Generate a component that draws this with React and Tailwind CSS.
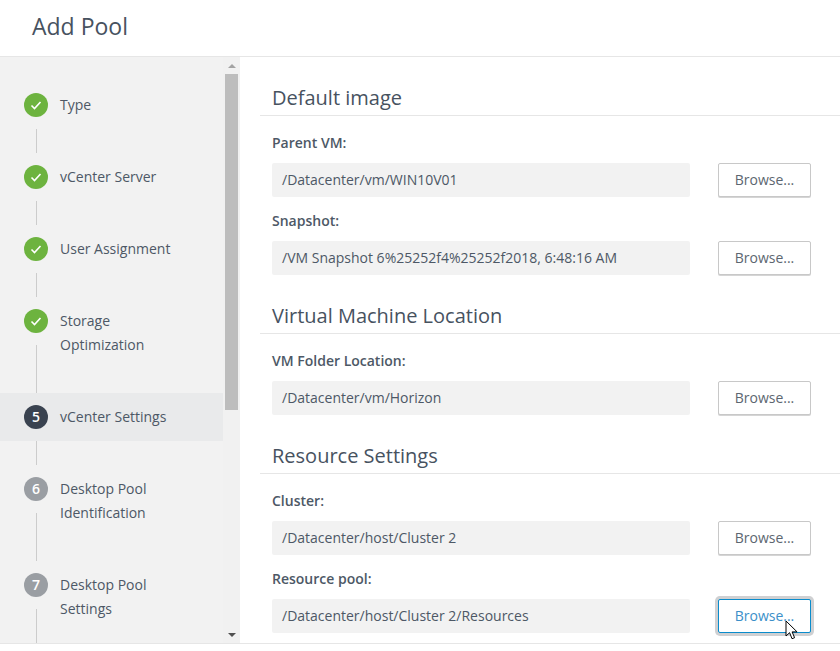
const font = { fontFamily: '"Open Sans", sans-serif' }

const Check = () => (
  <svg viewBox="0 0 24 24" className="h-6 w-6">
    <path d="M7.5 12.5l3 3 6-6.5" fill="none" stroke="#fff" strokeWidth="1.6" />
  </svg>
)

const Circle = ({ status, n }) => {
  if (status === 'done') {
    return (
      <div className="h-6 w-6 shrink-0 rounded-full bg-[#6db33f]">
        <Check />
      </div>
    )
  }
  return (
    <div
      className={`flex h-6 w-6 shrink-0 items-center justify-center rounded-full text-sm font-semibold text-white ${
        status === 'current' ? 'bg-[#3a4350]' : 'bg-[#9a9ea3]'
      }`}
    >
      {n}
    </div>
  )
}

const Step = ({ status = 'done', n, lines }) => {
  if (lines.length === 1) {
    return (
      <div className="flex flex-col">
        <div className={`flex h-12 items-center gap-3 pl-6 ${status === 'current' ? 'bg-[#e9eaeb]' : ''}`}>
          <Circle status={status} n={n} />
          <span className="text-sm leading-6 text-[#4d5866]">{lines[0]}</span>
        </div>
        <div className="ml-[36px] h-6 w-px bg-[#cccccc]" />
      </div>
    )
  }
  return (
    <div className="flex h-[96px] shrink-0 gap-3 pl-6 pt-3">
      <div className="flex flex-col">
        <Circle status={status} n={n} />
        <div className="ml-3 mt-3 w-px flex-1 bg-[#cccccc]" />
      </div>
      <div className="text-sm leading-6 text-[#4d5866]">
        {lines.map((l) => (
          <div key={l}>{l}</div>
        ))}
      </div>
    </div>
  )
}

const Scrollbar = () => (
  <div className="flex w-[17px] shrink-0 flex-col items-center bg-[#f1f1f1]">
    <div className="flex h-[17px] items-center justify-center">
      <div className="h-0 w-0 border-x-[4px] border-b-[4px] border-x-transparent border-b-[#a3a3a3]" />
    </div>
    <div className="h-[336px] w-[13px] bg-[#bdbdbd]" />
    <div className="flex-1" />
    <div className="flex h-[17px] items-center justify-center">
      <div className="h-0 w-0 border-x-[4px] border-t-[4px] border-x-transparent border-t-[#505050]" />
    </div>
  </div>
)

const Heading = ({ children }) => (
  <div className="flex h-[59px] items-end border-b border-[#e6e6e6] pb-[3px] pl-3">
    <h2 className="text-[20px] leading-7 text-[#47525f]">{children}</h2>
  </div>
)

const Field = ({ label, value, first, focused }) => (
  <div className={first ? 'mt-[15px]' : 'mt-3'}>
    <div className="pl-3 text-sm font-semibold leading-6 text-[#4d5866]">{label}</div>
    <div className="mt-2 flex items-center pl-3 pr-[29px]">
      <div className="flex h-[34px] flex-1 items-center rounded-[2px] bg-[#f2f2f2] px-2.5 text-sm text-[#4d5866]">
        {value}
      </div>
      <button
        className={`ml-7 h-[34px] w-[93px] rounded-[2px] border bg-white text-sm ${
          focused
            ? 'border-[#0a8ccc] text-[#3b8fc9] ring-[3px] ring-[#cfd0d2]'
            : 'border-[#c8c8c8] text-[#5c6670] shadow-[0_1px_0_#d5d5d5]'
        }`}
      >
        Browse...
      </button>
    </div>
  </div>
)

const Cursor = () => (
  <svg viewBox="0 0 14 21" className="absolute left-[785px] top-[620px] h-[21px] w-[14px]">
    <path
      d="M1 1v15l3.6-3.3 2.4 6 2.6-1-2.5-5.8h5z"
      fill="#fff"
      stroke="#000"
      strokeWidth="1"
      strokeLinejoin="round"
    />
  </svg>
)

export default function App() {
  return (
    <div className="relative h-[651px] w-[840px] overflow-hidden bg-white" style={font}>
      <header className="flex h-[57px] items-center border-b border-[#e6e6e6] pb-[3px] pl-8">
        <h1 className="text-[23px] text-[#47525f]">Add Pool</h1>
      </header>

      <div className="flex h-[587px] border-b border-[#e6e6e6]">
        <aside className="flex w-[240px] shrink-0 bg-[#f2f2f2]">
          <nav className="flex h-full flex-1 flex-col overflow-hidden pt-6">
            <Step lines={['Type']} />
            <Step lines={['vCenter Server']} />
            <Step lines={['User Assignment']} />
            <Step lines={['Storage', 'Optimization']} />
            <Step status="current" n={5} lines={['vCenter Settings']} />
            <Step status="todo" n={6} lines={['Desktop Pool', 'Identification']} />
            <Step status="todo" n={7} lines={['Desktop Pool', 'Settings']} />
          </nav>
          <Scrollbar />
        </aside>

        <main className="flex-1 overflow-hidden pl-5">
          <Heading>Default image</Heading>
          <Field first label="Parent VM:" value="/Datacenter/vm/WIN10V01" />
          <Field label="Snapshot:" value="/VM Snapshot 6%25252f4%25252f2018, 6:48:16 AM" />
          <Heading>Virtual Machine Location</Heading>
          <Field first label="VM Folder Location:" value="/Datacenter/vm/Horizon" />
          <Heading>Resource Settings</Heading>
          <Field first label="Cluster:" value="/Datacenter/host/Cluster 2" />
          <Field focused label="Resource pool:" value="/Datacenter/host/Cluster 2/Resources" />
        </main>
      </div>

      <Cursor />
    </div>
  )
}
